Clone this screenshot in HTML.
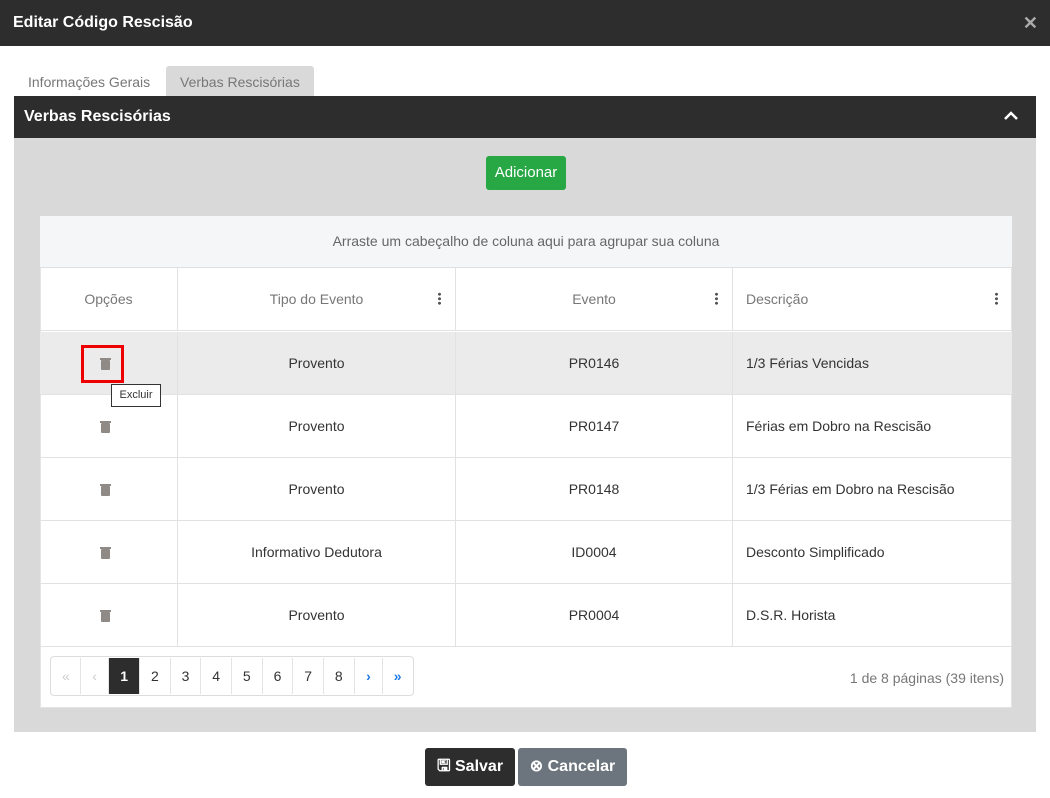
<!DOCTYPE html>
<html><head><meta charset="utf-8"><style>
*{box-sizing:border-box;margin:0;padding:0}
body{width:1050px;height:798px;background:#fff;font-family:"Liberation Sans",sans-serif;position:relative;overflow:hidden;color:#333}
.a{position:absolute}
.hdr{left:0;top:0;width:1050px;height:46px;background:#2d2d2d;color:#fff;font-weight:bold;font-size:16px;padding:14px 13px}
.x{right:12px;top:13px;color:#aaa;font-size:18px;font-weight:bold}
.tab{top:66px;height:30px;font-size:14px;color:#777;padding:8px 14px}
.bar{left:14px;top:96px;width:1022px;height:42px;background:#2d2d2d;color:#fff;font-weight:bold;font-size:16px;padding:12px 10px}
.panel{left:14px;top:138px;width:1022px;height:594px;background:#d9d9d9}
.add{left:486px;top:156px;width:80px;height:34px;background:#28a745;color:#fff;border-radius:3px;font-size:15px;text-align:center;line-height:34px}
.grid{left:40px;top:216px;width:972px;height:492px;background:#fff;border:1px solid #e4e4e4}
.grp{left:40px;top:216px;width:972px;height:52px;background:#f5f6f8;border-bottom:1px solid #e0e0e0;text-align:center;line-height:50px;font-size:14px;color:#666}
.row{left:40px;width:972px;height:63px;border-bottom:1px solid #e2e2e2;font-size:14px}
.c{position:absolute;top:0;height:100%;line-height:62px;border-right:1px solid #e2e2e2}
.c1{left:0;width:138px;text-align:center}.c2{left:138px;width:278px;text-align:center}.c3{left:416px;width:277px;text-align:center}.c4{left:693px;width:279px;padding-left:13px;border-right:none}
.h{color:#777}
.dots{position:absolute;right:14px;top:24px;width:3px;height:13px;background:radial-gradient(circle,#555 1.4px,transparent 1.6px) 0 0/3px 4.5px}
.trash{position:absolute;left:61px;top:28px;width:9px;height:10px;background:#8f8a86;border-radius:1px}
.trash:before{content:"";position:absolute;left:-1px;top:-2px;width:11px;height:2px;background:#8f8a86}
.pg{left:50px;top:656px;width:364px;height:40px;border:1px solid #ddd;border-radius:4px;display:flex;padding:1px}
.pg div{width:29px;text-align:center;line-height:36px;font-size:14px;border-right:1px solid #e4e4e4}
.pg div.n{width:31px}
.btn{top:748px;height:38px;border-radius:3px;color:#fff;font-weight:bold;font-size:16px;line-height:38px;text-align:center}
</style></head><body>
<div class="a hdr">Editar Código Rescisão</div><div class="a x">✕</div>
<div class="a tab" style="left:14px">Informações Gerais</div>
<div class="a tab" style="left:166px;width:148px;background:#d9d9d9;border-radius:3px 3px 0 0">Verbas Rescisórias</div>
<div class="a bar">Verbas Rescisórias</div>
<svg class="a" style="left:1003px;top:110px" width="16" height="12"><path d="M2 9 L8 3 L14 9" stroke="#fff" stroke-width="2.5" fill="none"/></svg>
<div class="a panel"></div>
<div class="a add">Adicionar</div>
<div class="a grid"></div>
<div class="a grp">Arraste um cabeçalho de coluna aqui para agrupar sua coluna</div>
<div class="a row h" style="top:268px"><div class="c c1">Opções</div><div class="c c2">Tipo do Evento<i class="dots"></i></div><div class="c c3">Evento<i class="dots"></i></div><div class="c c4">Descrição<i class="dots"></i></div></div>
<div class="a row" style="top:332px;background:#ebebeb"><div class="c c1"><span class="trash"></span></div><div class="c c2">Provento</div><div class="c c3">PR0146</div><div class="c c4">1/3 Férias Vencidas</div></div>
<div class="a row" style="top:395px"><div class="c c1"><span class="trash"></span></div><div class="c c2">Provento</div><div class="c c3">PR0147</div><div class="c c4">Férias em Dobro na Rescisão</div></div>
<div class="a row" style="top:458px"><div class="c c1"><span class="trash"></span></div><div class="c c2">Provento</div><div class="c c3">PR0148</div><div class="c c4">1/3 Férias em Dobro na Rescisão</div></div>
<div class="a row" style="top:521px"><div class="c c1"><span class="trash"></span></div><div class="c c2">Informativo Dedutora</div><div class="c c3">ID0004</div><div class="c c4">Desconto Simplificado</div></div>
<div class="a row" style="top:584px"><div class="c c1"><span class="trash"></span></div><div class="c c2">Provento</div><div class="c c3">PR0004</div><div class="c c4">D.S.R. Horista</div></div>
<div class="a" style="left:81px;top:345px;width:43px;height:38px;border:3px solid #e00"></div>
<div class="a" style="left:111px;top:384px;width:50px;height:23px;border:1px solid #333;background:#fff;font-size:11px;line-height:21px;text-align:center">Excluir</div>
<div class="a pg"><div style="color:#ccc">«</div><div style="color:#ccc">‹</div><div class="n" style="background:#2d2d2d;color:#fff;font-weight:bold">1</div><div class="n">2</div><div class="n">3</div><div class="n">4</div><div class="n">5</div><div class="n">6</div><div class="n">7</div><div class="n">8</div><div style="color:#1e7be6;font-weight:bold">›</div><div style="color:#1e7be6;font-weight:bold;border:none">»</div></div>
<div class="a" style="right:46px;top:670px;font-size:14px;color:#777">1 de 8 páginas (39 itens)</div>
<div class="a btn" style="left:425px;width:90px;background:#2d2d2d">🖫 Salvar</div>
<div class="a btn" style="left:518px;width:109px;background:#6c757d">⊗ Cancelar</div>
</body></html>
